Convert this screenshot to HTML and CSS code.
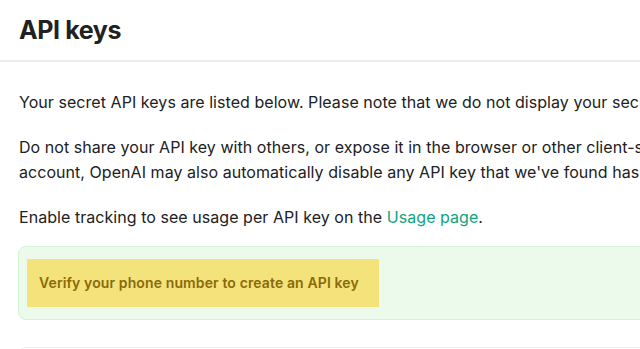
FILE: index.html
```html
<!DOCTYPE html>
<html lang="en">
<head>
    <meta charset="UTF-8">
    <meta name="viewport" content="width=device-width, initial-scale=1.0">
    <title>API keys</title>
    <link rel="stylesheet" href="styles.css">
</head>
<body>

    <!-- Judul halaman -->
    <div class="page-header">
        <h1>API keys</h1>
    </div>

    <div class="page-body">
        <p>Your secret API keys are listed below. Please note that we do not display your secret API keys again after you generate them.</p>
        <p>Do not share your API key with others, or expose it in the browser or other client-side code. In order to protect the security of your<br>account, OpenAI may also automatically disable any API key that we've found has leaked publicly.</p>
        <p class="tracking">Enable tracking to see usage per API key on the <a href="#">Usage page</a>.</p>

        <!-- Kotak verifikasi -->
        <div class="notice">
            <div class="verify">Verify your phone number to create an API key</div>
        </div>

        <div class="key-table"></div>
    </div>

</body>
</html>
```

FILE: styles.css
```css
html, body {
    overflow: hidden;
}
body {
    font-family: Inter, "Noto Sans", sans-serif;
    color: #202123;
    background: #fff;
    margin: 0;
    padding: 0;
    width: 1100px;
}
.page-header {
    height: 60px;
    padding: 0 19px;
    border-bottom: 2px solid #ececf1;
    display: flex;
    align-items: center;
}
.page-header h1 {
    margin: 0;
    font-size: 25px;
    font-weight: 700;
    letter-spacing: -0.4px;
}
.page-body {
    padding: 28px 18px 0 18px;
}
.page-body p {
    margin: 0 0 20px 1px;
    font-size: 16px;
    line-height: 25px;
    letter-spacing: 0.05px;
}
.page-body p.tracking {
    margin-bottom: 16px;
}
.page-body a {
    color: #10a37f;
    text-decoration: none;
}
.notice {
    background: #ebfaeb;
    border: 1px solid #d2f4d3;
    border-radius: 8px;
    padding: 12px 8px;
}
.verify {
    display: inline-block;
    background: #f4e27a;
    color: #8a6a0a;
    font-size: 14px;
    font-weight: 600;
    letter-spacing: 0.12px;
    width: 328px;
    height: 48px;
    line-height: 48px;
    padding: 0 12px;
}
.key-table {
    margin-top: 27px;
    height: 80px;
    border: 1px solid #ececf1;
    border-radius: 8px;
}
```
